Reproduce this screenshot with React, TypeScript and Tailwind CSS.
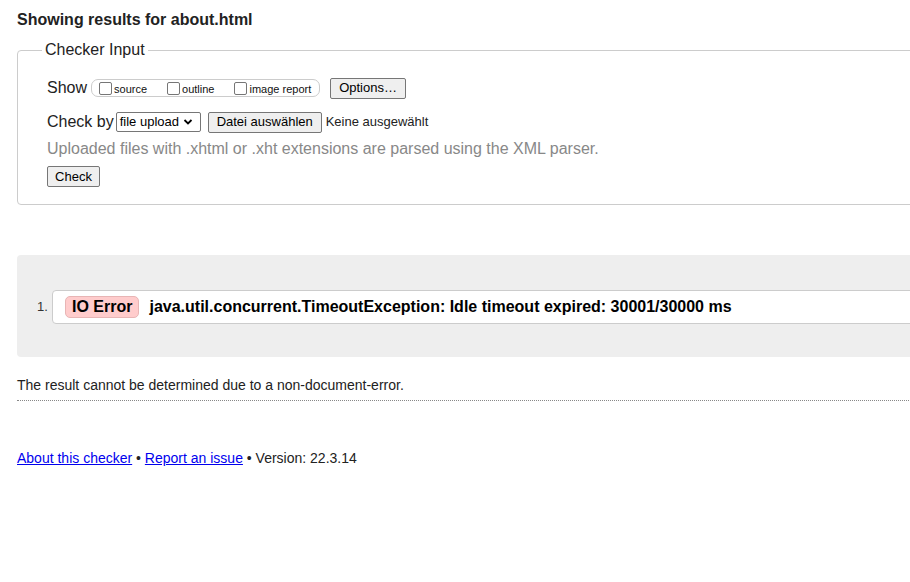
const sans = "font-['Liberation_Sans',Arial,sans-serif]";

function Checkbox({ label }: { label: string }) {
  return (
    <label className="flex items-center mr-[20px] last:mr-0">
      <span className="w-[13px] h-[13px] border border-[#767676] rounded-[2px] bg-white mr-[2px]" />
      <span className="text-[11px] leading-none mt-[3px] text-[#111]">{label}</span>
    </label>
  );
}

function Btn({ children, className = '' }: { children: React.ReactNode; className?: string }) {
  return (
    <span
      className={`inline-flex items-center justify-center h-[21px] px-[7px] text-[13px] text-black bg-[#efefef] border border-[#767676] rounded-[2px] ${className}`}
    >
      {children}
    </span>
  );
}

function CheckerInput() {
  return (
    <div className="relative mt-[21px] border border-[#ccc] rounded-[4px] w-[1000px] h-[155px] pl-[29px] pt-[27px]">
      <span className="absolute left-[24px] top-[-11px] bg-white px-[3px] text-[16px] leading-[20px] text-[#222]">
        Checker Input
      </span>
      <div className="flex items-center h-[20px]">
        <span className="text-[16px] text-[#222] mr-[4px]">Show</span>
        <div className="flex items-center h-[18px] border border-[#ccc] rounded-[7px] pl-[7px] pr-[5px] w-[229px]">
          <Checkbox label="source" />
          <Checkbox label="outline" />
          <Checkbox label="image report" />
        </div>
        <Btn className="ml-[10px] w-[76px]">Options…</Btn>
      </div>
      <div className="flex items-center h-[20px] mt-[14px]">
        <span className="text-[16px] text-[#222] mr-[2px]">Check by</span>
        <span className="inline-flex items-center h-[20px] w-[85px] border border-[#767676] rounded-[2px] pl-[3px] text-[13px] text-black">
          file upload
          <svg width="10" height="8" viewBox="0 0 10 8" className="ml-[4px]">
            <path d="M1.5 2 L5 5.5 L8.5 2" fill="none" stroke="#000" strokeWidth="1.8" />
          </svg>
        </span>
        <Btn className="ml-[7px] w-[114px]">Datei auswählen</Btn>
        <span className="ml-[4px] text-[13px] text-[#222]">Keine ausgewählt</span>
      </div>
      <p className="mt-[8px] text-[16px] leading-[18px] text-[#888]">
        Uploaded files with .xhtml or .xht extensions are parsed using the XML parser.
      </p>
      <Btn className="mt-[8px] w-[53px]">Check</Btn>
    </div>
  );
}

function Results() {
  return (
    <div className="mt-[50px] w-[1000px] h-[102px] bg-[#eee] rounded-[4px] flex items-center pl-[20px] pt-[2px]">
      <span className="text-[13px] text-[#333] w-[15px]">1.</span>
      <div className="flex-1 h-[34px] bg-white border border-[#ccc] rounded-l-[4px] flex items-center pl-[12px]">
        <span className="h-[22px] px-[6px] bg-[#fcc] border border-[#e8b5b5] rounded-[5px] text-[16px] font-bold text-black flex items-center">
          IO Error
        </span>
        <span className="ml-[10px] text-[16px] font-bold text-black">
          java.util.concurrent.TimeoutException: Idle timeout expired: 30001/30000 ms
        </span>
      </div>
    </div>
  );
}

export default function App() {
  return (
    <div className={`w-[910px] h-[582px] overflow-hidden bg-white ${sans}`}>
      <div className="pl-[17px] pt-[10px]">
        <h2 className="text-[16px] font-bold text-[#222] leading-[19px]">Showing results for about.html</h2>
        <CheckerInput />
        <Results />
        <p className="mt-[20px] text-[14px] text-[#222] leading-[16px]">
          The result cannot be determined due to a non-document-error.
        </p>
        <div className="mt-[7px] w-[1000px] border-t border-dotted border-[#888]" />
        <p className="mt-[49px] text-[14px] text-[#222] leading-[16px]">
          <a className="text-[#00e] underline">About this checker</a> • <a className="text-[#00e] underline">Report an issue</a> • Version: 22.3.14
        </p>
      </div>
    </div>
  );
}
